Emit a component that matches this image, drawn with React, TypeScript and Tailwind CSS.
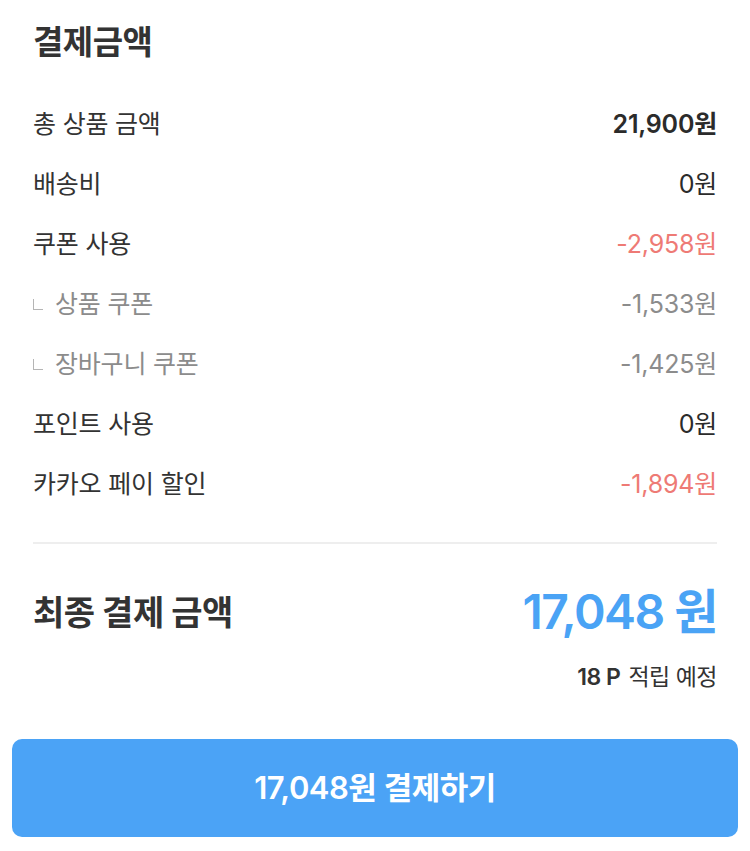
import React from "react";

const font = { fontFamily: 'Inter, "Noto Sans CJK KR", "Noto Sans", sans-serif' };

type Row = { label: string; value: string; sub?: boolean; tone?: "bold" | "red" | "gray" | "normal" };

const rows: Row[] = [
  { label: "총 상품 금액", value: "21,900원", tone: "bold" },
  { label: "배송비", value: "0원" },
  { label: "쿠폰 사용", value: "-2,958원", tone: "red" },
  { label: "상품 쿠폰", value: "-1,533원", sub: true, tone: "gray" },
  { label: "장바구니 쿠폰", value: "-1,425원", sub: true, tone: "gray" },
  { label: "포인트 사용", value: "0원" },
  { label: "카카오 페이 할인", value: "-1,894원", tone: "red" },
];

export default function App() {
  return (
    <div className="w-[750px] h-[851px] bg-white text-[#333333]" style={font}>
      <div className="px-[33px]">
        <h2 className="pt-[20px] h-[95px] text-[33px] font-bold leading-[44px] tracking-[-0.5px]">결제금액</h2>

        <div>
          {rows.map((r) => (
            <div key={r.label} className="h-[60px] flex items-center justify-between text-[25px] tracking-[-0.2px]">
              {r.sub ? (
                <div className="flex items-center text-[#8c8c8c]">
                  <span className="w-[22px] flex">
                    <span className="block w-[10px] h-[11px] border-l-[1.5px] border-b-[1.5px] border-[#b5b5b5] -mt-[2px]" />
                  </span>
                  <span>{r.label}</span>
                </div>
              ) : (
                <span>{r.label}</span>
              )}
              <span
                className={
                  r.tone === "bold"
                    ? "font-semibold text-[#2b2b2b]"
                    : r.tone === "red"
                    ? "text-[#ee7a75]"
                    : r.tone === "gray"
                    ? "text-[#8c8c8c]"
                    : "text-[#2b2b2b]"
                }
              >
                {r.value}
              </span>
            </div>
          ))}
        </div>

        <div className="mt-[27px] border-t-2 border-[#eeeeee]" />

        <div className="mt-[38px] h-[60px] flex items-center justify-between">
          <span className="text-[34px] font-bold tracking-[-0.5px]">최종 결제 금액</span>
          <span className="text-[48px] font-semibold text-[#4aa3f5] tracking-[-1.5px]">17,048 원</span>
        </div>
        <div className="mt-[22px] h-[26px] flex items-center justify-end text-[23px] tracking-[-0.5px]">
          <span className="font-semibold mr-[8px]">18 P</span>
          <span>적립 예정</span>
        </div>
      </div>

      <div className="px-[12px] mt-[49px]">
        <button className="w-full h-[98px] rounded-[10px] bg-[#4ba3f6] text-white text-[31px] font-semibold tracking-[-0.5px] flex items-center justify-center">
          17,048원 결제하기
        </button>
      </div>
    </div>
  );
}
